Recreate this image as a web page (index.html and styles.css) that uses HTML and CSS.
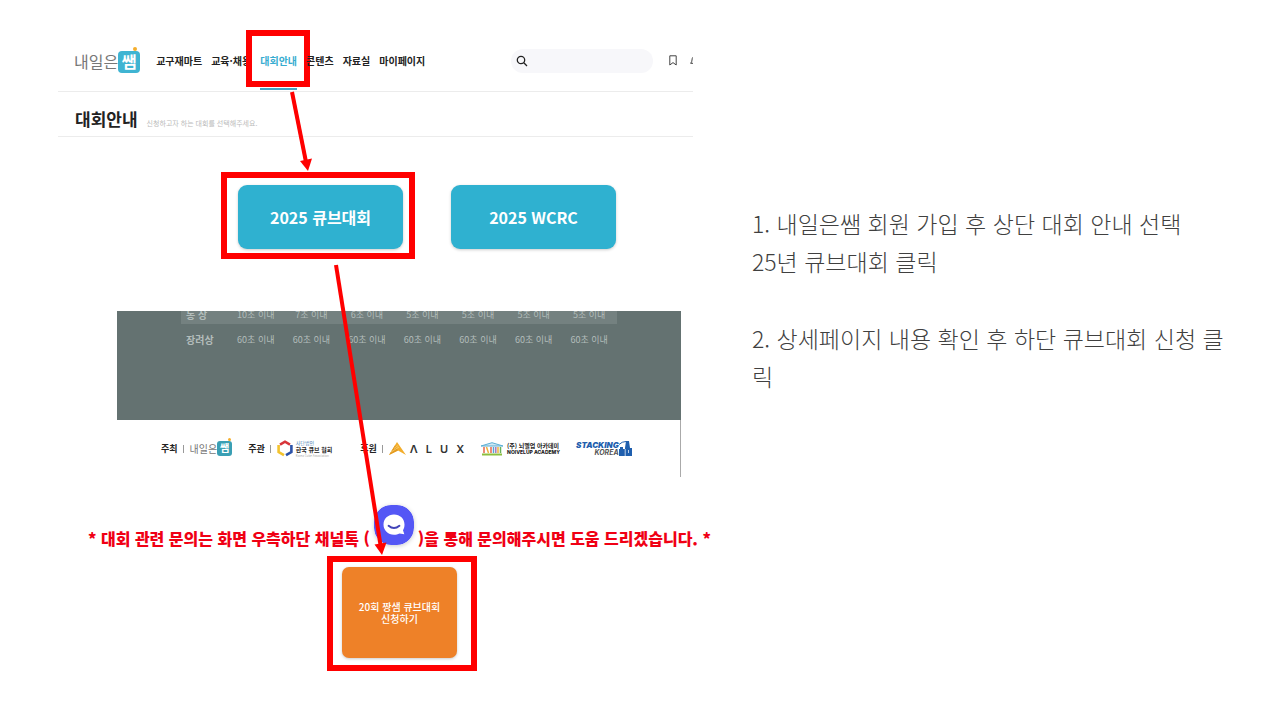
FILE: index.html
```
<!DOCTYPE html>
<html lang="ko">
<head>
  <meta charset="utf-8">
  <title>큐브대회 신청 안내</title>
  <meta name="viewport" content="width=device-width, initial-scale=1">
  <link rel="stylesheet" href="styles.css">
</head>
<body>
  <div class="slide">
    <div class="capture">
      <header class="header">
        <a class="logo" href="#">
          <span>내일은</span>
          <span class="logo-box">쌤</span>
        </a>
        <nav class="nav">
          <a href="#">교구재마트</a>
          <a href="#">교육·채용</a>
          <a class="active" href="#">대회안내</a>
          <a href="#">콘텐츠</a>
          <a href="#">자료실</a>
          <a href="#">마이페이지</a>
        </nav>
        <div class="search">
          <svg width="12" height="12" viewBox="0 0 12 12" fill="none" stroke="#222" stroke-width="1.3">
            <circle cx="5" cy="5" r="3.7"/>
            <path d="M7.8 7.8L11 11"/>
          </svg>
          <input type="text" aria-label="검색">
        </div>
        <svg class="bookmark" width="8" height="11" viewBox="0 0 8 11" fill="none" stroke="#444" stroke-width="1">
          <path d="M.8 .8H7.2V10L4 7.600L.8 10Z"/>
        </svg>
        <svg class="bell" width="3" height="11" viewBox="0 0 3 11" fill="none" stroke="#444" stroke-width="1">
          <path d="M5 1C3 1.500 2 3 2 5C2 6.500 1.500 7.200.6 8.300H5"/>
        </svg>
      </header>

      <div class="page-title">
        <h1>대회안내</h1>
        <p>신청하고자 하는 대회를 선택해주세요.</p>
      </div>

      <div class="contests">
        <div class="mark">
          <button class="contest">2025 큐브대회</button>
        </div>
        <button class="contest">2025 WCRC</button>
      </div>

      <div class="detail">
        <div class="record">
          <table>
            <tr><th>동 상</th><td>10초 이내</td><td>7초 이내</td><td>6초 이내</td><td>5초 이내</td><td>5초 이내</td><td>5초 이내</td><td>5초 이내</td></tr>
            <tr><th>장려상</th><td>60초 이내</td><td>60초 이내</td><td>60초 이내</td><td>60초 이내</td><td>60초 이내</td><td>60초 이내</td><td>60초 이내</td></tr>
          </table>
        </div>
        <div class="sponsors">
          <div class="sponsor">
            <b>주최</b><i></i>
            <span class="logo small">
              <span>내일은</span>
              <span class="logo-box">쌤</span>
            </span>
          </div>
          <div class="sponsor host">
            <b>주관</b><i></i>
            <svg width="16" height="17" viewBox="0 0 16 17" fill="none" stroke-width="2.6">
              <path d="M3 4.600L8 1.700L13 4.600" stroke="#d8343a"/>
              <path d="M1.600 5V12L7 15.200" stroke="#f3c32e"/>
              <path d="M14.400 5V12L9 15.200" stroke="#2c52a8"/>
            </svg>
            <span class="assoc">
              <em>사단법인</em>
              <strong>한국 큐브 협회</strong>
              <small>Korea Cube Association</small>
            </span>
          </div>
          <div class="sponsor">
            <b>후원</b><i></i>
            <svg width="17" height="14" viewBox="0 0 17 14">
              <path d="M0 13L8 0L17 13L9 8.500Z" fill="#f3ad2b"/>
              <path d="M0 13L9 8.500L6 3.300Z" fill="#e39a20"/>
              <path d="M2 10L10 5M5 6.500L9 3.500" stroke="#fbd57e" stroke-width=".7"/>
            </svg>
            <span class="alux"><span>Λ</span><span>L</span><span>U</span><span>X</span></span>
          </div>
          <div class="sponsor">
            <svg width="24" height="14" viewBox="0 0 24 14" fill="none">
              <path d="M1 4L12 .7L23 4Z" fill="#cfe8f4" stroke="#5aaed4"/>
              <path d="M2 12.500H22" stroke="#8cbf3f" stroke-width="2"/>
              <path d="M4 5V11M11 5V11" stroke="#e8664b" stroke-width="1.500"/>
              <path d="M6.500 5L8.500 11M18 5V11" stroke="#f0b13c" stroke-width="1.500"/>
              <path d="M13.500 5V11" stroke="#54a6d6" stroke-width="1.500"/>
              <path d="M15.800 5V11" stroke="#a678b8" stroke-width="1.500"/>
              <path d="M20.500 5V11" stroke="#68b25a" stroke-width="1.500"/>
            </svg>
            <span class="academy">
              <strong>(주) 뇌벨업 아카데미</strong>
              <strong class="en">NOIVELUP ACADEMY</strong>
            </span>
          </div>
          <div class="sponsor">
            <span class="stacking">
              <strong>STACKING</strong>
              <em>KOREA</em>
            </span>
            <svg width="14" height="17" viewBox="0 0 14 17">
              <path d="M0 16V9H1V7H4V9H6V16ZM6 16V8L7 1H10L11 8H13V16Z" fill="#1f5fae"/>
              <path d="M0 4.500Q3 1.500 7 1.500" stroke="#1f5fae" stroke-width="1" fill="none"/>
              <path d="M6.200 9V16M9.500 10V13" stroke="#fff" stroke-width=".7"/>
            </svg>
          </div>
        </div>
      </div>

      <div class="notice">
        <span>* 대회 관련 문의는 화면 우측하단 채널톡 (</span>
        <svg width="40" height="40" viewBox="0 0 40 40">
          <rect width="40" height="40" rx="17" fill="#5457f5"/>
          <path d="M20 9.500C26 9.500 30.500 13.800 30.500 19.500C30.500 22 29.900 23.800 29 25.200L30.300 29.300L25.500 28.400C23.900 29.300 22 29.800 20 29.800C14 29.800 9.500 25.500 9.500 19.600C9.500 13.800 14 9.500 20 9.500Z" fill="#fff"/>
          <path d="M14.600 20.800Q20 25.300 25.400 20.800" fill="none" stroke="#4244b8" stroke-width="2" stroke-linecap="round"/>
        </svg>
        <span>)을 통해 문의해주시면 도움 드리겠습니다. *</span>
      </div>

      <div class="apply">
        <div class="mark">
          <button class="apply-btn">20회 짱샘 큐브대회<br>신청하기</button>
        </div>
      </div>
    </div>

    <div class="guide">
      <p>1. 내일은쌤 회원 가입 후 상단 대회 안내 선택<br>25년 큐브대회 클릭</p>
      <p>2. 상세페이지 내용 확인 후 하단 큐브대회 신청 클릭</p>
    </div>

    <!-- 순서 화살표 -->
    <svg class="arrows" width="720" height="720" viewBox="0 0 720 720">
      <g stroke="#f00" stroke-width="4">
        <path d="M292 92L306 162"/>
        <path d="M336 265L380.500 545"/>
      </g>
      <g fill="#f00">
        <path d="M308 171L300 161L312 158.500Z"/>
        <path d="M382 555L374.500 544.500L386.500 542.500Z"/>
      </g>
    </svg>
  </div>
</body>
</html>
```
FILE: styles.css
```
/* 기본 설정 */
* {
  box-sizing: border-box;
}

body {
  margin: 0;
  background: #fff;
  color: #222;
  font-family: "Noto Sans CJK KR", sans-serif;
}

h1, p {
  margin: 0;
}

a {
  color: inherit;
  text-decoration: none;
}

button {
  border: none;
  padding: 0;
  color: #fff;
  font-family: inherit;
  font-weight: 700;
  cursor: pointer;
}

.slide {
  position: relative;
  display: grid;
  grid-template-columns: minmax(0, 683px) 1fr;
  gap: 11px;
  padding: 30px 40px 30px 58px;
}

/* 상단 메뉴 */
.header {
  display: flex;
  align-items: center;
  height: 62px;
  width: 93%;
  padding-left: 16px;
  border-bottom: 1px solid #ececec;
}

.logo {
  display: flex;
  align-items: center;
  color: #777;
  font-size: 16px;
}

.logo-box {
  position: relative;
  width: 22px;
  height: 22px;
  margin-top: 2px;
  border-radius: 4px;
  background: #3fb4d2;
  color: #fff;
  font-size: 16px;
  font-weight: 700;
  line-height: 20px;
  text-align: center;
}

.logo-box::after {
  content: '';
  position: absolute;
  top: -4px;
  right: 3px;
  width: 4px;
  height: 4px;
  border-radius: 50%;
  background: #f5ae2c;
}

.nav {
  display: flex;
  gap: 9px;
  margin-left: 16px;
  font-size: 10px;
  font-weight: 700;
  line-height: 61px;
  white-space: nowrap;
}

.nav a {
  position: relative;
}

.nav .active {
  color: #36acd0;
}

.nav .active::before {
  content: '';
  position: absolute;
  left: 0;
  right: 0;
  bottom: 1px;
  height: 2px;
  background: #45a5c6;
}

.search {
  display: flex;
  align-items: center;
  flex: none;
  width: 142px;
  height: 24px;
  margin-left: auto;
  padding: 0 5px;
  border-radius: 12px;
  background: #f7f7fa;
}

.search input {
  flex: 1;
  min-width: 0;
  border: none;
  background: none;
  outline: none;
}

.bookmark {
  margin: 0 13px 0 16px;
}

.page-title {
  display: flex;
  align-items: baseline;
  gap: 9px;
  width: 93%;
  height: 45px;
  padding: 14px 0 0 17px;
  border-bottom: 1px solid #ececec;
}

.page-title h1 {
  font-size: 17px;
  line-height: 26px;
}

.page-title p {
  color: #bbb;
  font-size: 7px;
}

/* 대회 선택 버튼 */
.contests {
  display: flex;
  justify-content: center;
  gap: 48px;
  padding: 48px 0 62px 55px;
}

.contest {
  width: 165px;
  height: 64px;
  border-radius: 9px;
  background: #2fb1d0;
  box-shadow: 0 1px 3px #ccc;
  font-size: 16px;
}

/* 빨간 강조 박스 */
.mark {
  position: relative;
}

.mark::after,
.nav .active::after {
  content: '';
  position: absolute;
  border: 6px solid #f00;
  pointer-events: none;
}

.nav .active::after {
  inset: 0 -13px 4px -14px;
}

.contests .mark::after {
  inset: -13px -12px -10px -17px;
}

.apply .mark::after {
  inset: -11px -20px -13px -15px;
}

/* 상세 페이지 */
.detail {
  width: 564px;
  margin-left: 59px;
  border-right: 1px solid #aaa;
}

.record {
  height: 109px;
  padding: 0 64px;
  margin-right: -1px;
  overflow: hidden;
  background: #647271;
}

.record table {
  width: 100%;
  margin-top: -5px;
  border-collapse: collapse;
  table-layout: fixed;
  color: #b3bdbb;
  font-size: 9px;
  text-align: center;
}

.record th {
  width: 47px;
  padding: 0 0 0 5px;
  font-size: 10px;
  text-align: left;
}

.record td {
  padding: 0;
}

.record tr {
  height: 30px;
}

.record tr:first-child {
  height: 18px;
  line-height: 18px;
  background: #748180;
}

.sponsors {
  display: flex;
  align-items: center;
  gap: 16px;
  height: 57px;
  padding-left: 44px;
  white-space: nowrap;
}

.sponsor {
  display: flex;
  align-items: center;
  font-size: 9px;
}

.sponsor i {
  width: 1px;
  height: 8px;
  margin: 0 6px 0 5px;
  background: #999;
}

.host {
  margin-right: 12px;
}

.small {
  font-size: 10px;
}

.small .logo-box {
  width: 15px;
  height: 15px;
  margin-top: 0;
  border-radius: 3px;
  background: #3a9fb4;
  font-size: 10px;
  line-height: 13px;
}

.small .logo-box::after {
  top: -3px;
  right: 1px;
  width: 3px;
  height: 3px;
}

.assoc {
  display: flex;
  flex-direction: column;
  margin-left: 3px;
}

.assoc em {
  color: #4b7fb5;
  font-size: 5px;
  font-style: normal;
  line-height: 6px;
}

.assoc strong {
  font-size: 6px;
  line-height: 8px;
}

.assoc small {
  color: #aaa;
  font-size: 3px;
  line-height: 4px;
}

.alux {
  display: flex;
  gap: 8px;
  margin-left: 4px;
  color: #333;
  font-family: "Inter", sans-serif;
  font-size: 11px;
  font-weight: 600;
}

.academy {
  display: flex;
  flex-direction: column;
  margin-left: 3px;
  font-size: 6px;
  line-height: 7px;
}

.academy .en {
  font-family: "Inter", sans-serif;
  font-size: 5px;
  font-weight: 800;
}

.stacking {
  display: flex;
  flex-direction: column;
  align-items: flex-end;
  font-family: "Inter", sans-serif;
  font-style: italic;
}

.stacking strong {
  color: #1f5fae;
  font-size: 8px;
  font-weight: 900;
  line-height: 8px;
}

.stacking em {
  color: #555;
  font-size: 7px;
  font-weight: 700;
  line-height: 7px;
}

/* 문의 안내 */
.notice {
  display: flex;
  justify-content: center;
  gap: 4px;
  margin-top: 28px;
  color: #f00014;
  font-size: 16px;
  font-weight: 900;
  white-space: nowrap;
}

.notice span {
  padding-top: 21px;
  line-height: 24px;
}

.notice svg {
  flex: none;
  border-radius: 17px;
  box-shadow: 0 1px 4px #ccc;
}

.apply {
  display: flex;
  justify-content: center;
  padding-top: 17px;
}

.apply-btn {
  width: 115px;
  height: 91px;
  border-radius: 7px;
  background: #ee8128;
  box-shadow: 0 1px 3px #ccc;
  font-size: 10px;
  font-weight: 500;
  line-height: 12px;
}

/* 오른쪽 설명 */
.guide {
  padding-top: 174px;
  color: #404040;
  font-size: 23px;
  font-weight: 300;
  line-height: 38px;
}

.guide p + p {
  margin-top: 39px;
}

.arrows {
  position: absolute;
  top: 0;
  left: 0;
  pointer-events: none;
}
```
